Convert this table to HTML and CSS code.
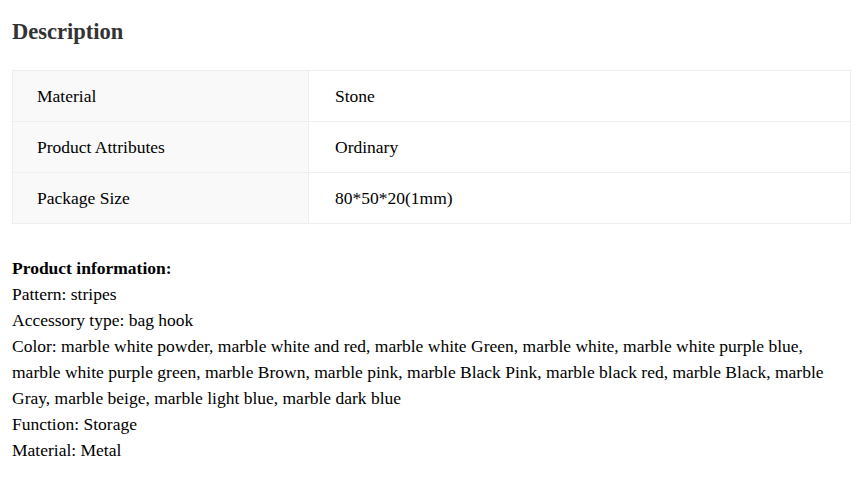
FILE: index.html
```html
<!DOCTYPE html>
<html>
<head>
<meta charset="utf-8">
<link rel="stylesheet" href="styles.css">
</head>
<body>
<div class="page">
  <h2 class="title">Description</h2>
  <table class="specs">
    <tr><td class="label">Material</td><td class="value">Stone</td></tr>
    <tr><td class="label">Product Attributes</td><td class="value">Ordinary</td></tr>
    <tr><td class="label">Package Size</td><td class="value">80*50*20(1mm)</td></tr>
  </table>
  <div class="info">
    <p><strong>Product information:</strong></p>
    <p>Pattern: stripes</p>
    <p>Accessory type: bag hook</p>
    <p>Color: marble white powder, marble white and red, marble white Green, marble white, marble white purple blue, marble white purple green, marble Brown, marble pink, marble Black Pink, marble black red, marble Black, marble Gray, marble beige, marble light blue, marble dark blue</p>
    <p>Function: Storage</p>
    <p>Material: Metal</p>
  </div>
</div>
</body>
</html>
```
FILE: styles.css
```css
html, body {
  margin: 0;
  padding: 0;
  background: #fff;
}
body {
  font-family: "Liberation Serif", "Times New Roman", serif;
  color: #000;
  font-size: 17.5px;
}
.page {
  padding: 0 11px 0 12px;
}
.title {
  margin: 0;
  padding-top: 18px;
  font-size: 22.5px;
  line-height: 28px;
  font-weight: bold;
  color: #333;
}
.specs {
  margin-top: 24px;
  width: 100%;
  border-collapse: collapse;
  border: 1px solid #eee;
}
.specs td {
  height: 50px;
  padding: 0 24px;
  border: 1px solid #eee;
  font-size: 17.5px;
  line-height: 20px;
  vertical-align: middle;
}
.specs td.label {
  width: 247px;
  background: #f9f9f9;
}
.specs td.value {
  padding-left: 26px;
}
.info {
  margin-top: 31px;
  line-height: 26px;
}
.info p {
  margin: 0;
}
```
